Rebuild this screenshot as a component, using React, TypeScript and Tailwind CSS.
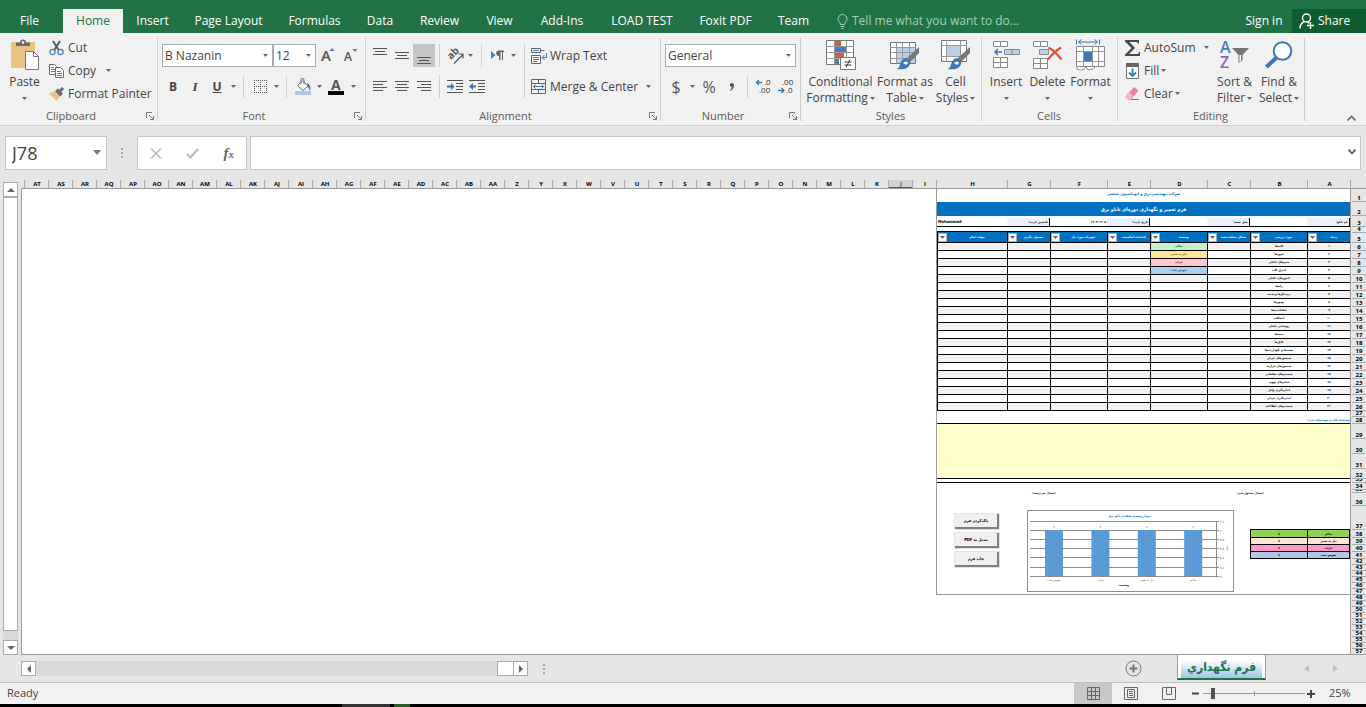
import type { ReactNode } from "react";

/* ---------- data ---------- */

const tabs = [
  { name: "Insert", width: "w-[59px]" },
  { name: "Page Layout", width: "w-[93px]" },
  { name: "Formulas", width: "w-[79px]" },
  { name: "Data", width: "w-[52px]" },
  { name: "Review", width: "w-[67px]" },
  { name: "View", width: "w-[53px]" },
  { name: "Add-Ins", width: "w-[72px]" },
  { name: "LOAD TEST", width: "w-[88px]" },
  { name: "Foxit PDF", width: "w-[79px]" },
  { name: "Team", width: "w-[57px]" },
];

const emptyColumns =
  "AT AS AR AQ AP AO AN AM AL AK AJ AI AH AG AF AE AD AC AB AA Z Y X W V U T S R Q P O N M L K J I".split(
    " "
  );

const formColumns = [
  { name: "H", width: "w-[71px]", title: "مهلت انجام" },
  { name: "G", width: "w-[43px]", title: "مسئول پیگیری" },
  { name: "F", width: "w-[57px]", title: "تجهیزات مورد نیاز" },
  { name: "E", width: "w-[43px]", title: "اقدامات انجام‌شده" },
  { name: "D", width: "w-[57px]", title: "وضعیت" },
  { name: "C", width: "w-[43px]", title: "مشکل مشاهده‌شده" },
  { name: "B", width: "w-[57px]", title: "مورد بررسی" },
  { name: "A", width: "w-[43px]", title: "ردیف" },
];

// height of every sheet row at 25% zoom
const rowHeights = [
  13, 14, 11, 6, 10,
  8, 8, 8, 8, 8, 8, 8, 8, 8, 8, 8, 8, 8, 8, 8, 8, 8, 8, 8, 8, 8,
  6, 7, 15, 15, 15, 10, 4, 7, 3, 13, 24, 8, 7, 7, 7,
  6, 6, 6, 6, 6, 6, 6, 6, 6, 6, 6, 6, 6, 6, 6, 6,
];

const items = [
  ["۱", "کلیدها"],
  ["۲", "فیوزها"],
  ["۳", "سیم‌های داخلی"],
  ["۴", "کنترل کلید"],
  ["۵", "کنتورهای داخلی"],
  ["۶", "رله‌ها"],
  ["۷", "ترمینال‌ها و شینه"],
  ["۸", "موتورها"],
  ["۹", "خنک‌کننده‌ها"],
  ["۱۰", "اتصالات"],
  ["۱۱", "روشنایی داخلی"],
  ["۱۲", "پمپ‌ها"],
  ["۱۳", "کابل‌ها"],
  ["۱۴", "بست‌ها و نگهدارنده‌ها"],
  ["۱۵", "سنسورهای جریان"],
  ["۱۶", "سنسورهای حرارت"],
  ["۱۷", "سیستم‌های حفاظتی"],
  ["۱۸", "فیلترهای تهویه"],
  ["۱۹", "اندازه‌گیری ولتاژ"],
  ["۲۰", "اندازه‌گیری جریان"],
  ["۲۱", "سیستم‌های اطلاعات"],
];

const statuses = [
  { text: "سالم", cell: "bg-[#c6efce] text-[#006100]" },
  { text: "نیاز به تعمیر", cell: "bg-[#ffe699] text-[#7f6000]" },
  { text: "خراب", cell: "bg-[#ffc7ce] text-[#9c0006]" },
  { text: "تعویض شده", cell: "bg-[#a9d0ee] text-[#1f4e78]" },
];

const summary = [
  { text: "سالم", row: "h-2 bg-[#92d050]" },
  { text: "نیاز به تعمیر", row: "h-[7px] bg-[#fce4d6]" },
  { text: "خراب", row: "h-[7px] bg-[#ff99cc]" },
  { text: "تعویض شده", row: "h-[7px] bg-[#b4c6e7]" },
];

/* ---------- small pieces ---------- */

const Caret = ({ className = "" }: { className?: string }) => (
  <svg width="5" height="3" viewBox="0 0 5 3" className={`shrink-0 ${className}`}>
    <path d="M0 0h5L2.5 3z" fill="#666" />
  </svg>
);

const Sep = ({ className = "h-6" }: { className?: string }) => (
  <div className={`w-px shrink-0 bg-[#d0d0d0] ${className}`} />
);

const IconButton = ({
  label,
  width = "w-[22px]",
  children,
  className = "",
}: {
  label: string;
  width?: string;
  children: ReactNode;
  className?: string;
}) => (
  <button
    aria-label={label}
    className={`flex h-[23px] shrink-0 items-center justify-center ${width} ${className}`}
  >
    {children}
  </button>
);

const Group = ({
  title,
  width,
  launcher = false,
  children,
}: {
  title: string;
  width: string;
  launcher?: boolean;
  children: ReactNode;
}) => (
  <section className={`relative flex shrink-0 flex-col ${width}`}>
    <div className="flex h-[75px] pt-[3px]">{children}</div>
    <div className="flex h-[18px] items-center text-[#5c5c5c]">
      <span className={`flex-1 text-center text-[11px] ${launcher ? "pr-1" : "pr-[2px]"}`}>{title}</span>
      {launcher && (
        <button aria-label={`${title} settings`} className="mr-1 w-2">
          <svg width="8" height="8" viewBox="0 0 8 8" fill="none" stroke="#777">
            <path d="M.5 6V.5H6M3 3l4 4M7.500 4v3.500H4" />
          </svg>
        </button>
      )}
    </div>
    <div className="absolute right-0 top-[5px] h-[83px] w-px bg-[#d0d0d0]" />
  </section>
);

const BigButton = ({
  icon,
  lines,
  width,
}: {
  icon: ReactNode;
  lines: string[];
  width: string;
}) => (
  <button className={`flex shrink-0 flex-col items-center whitespace-nowrap ${width}`}>
    <span className="flex h-[38px] items-center justify-center">{icon}</span>
    <span className="h-4 leading-4">{lines[0]}</span>
    <span className="flex h-4 items-center leading-4">
      {lines[1]}
      <Caret className={lines[1] ? "ml-[2px]" : ""} />
    </span>
  </button>
);

const RowButton = ({
  icon,
  text,
  caret = "",
}: {
  icon: ReactNode;
  text: string;
  caret?: string;
}) => (
  <button className="flex h-[23px] items-center whitespace-nowrap">
    <span className="flex w-[19px] shrink-0">{icon}</span>
    {text}
    {caret && <Caret className={caret} />}
  </button>
);

const Combo = ({ label, value, width }: { label: string; value: string; width: string }) => (
  <div className={`relative h-[23px] shrink-0 ${width}`}>
    <select
      aria-label={label}
      className="h-full w-full appearance-none border border-[#ababab] bg-white pl-[2px] text-[12px] text-[#444]"
    >
      <option>{value}</option>
    </select>
    <Caret className="absolute right-[5px] top-[10px]" />
  </div>
);

const Lines = ({ rows }: { rows: [number, number, number][] }) => (
  <svg width="14" height="18" viewBox="0 0 14 18" stroke="#555">
    {rows.map(([x1, x2, y]) => (
      <path key={y} d={`M${x1} ${y + 0.5}H${x2}`} />
    ))}
  </svg>
);

/* ---------- icons ---------- */

const PasteIcon = () => (
  <svg width="30" height="32" viewBox="0 0 30 32">
    <rect x="1" y="3" width="24" height="26" fill="#eac282" />
    <path d="M6 7V3.500h4a3 3 0 0 1 6 0h4V7z" fill="#6b6b6b" />
    <circle cx="13" cy="3.500" r="1.200" fill="#fff" />
    <path d="M15.500 12.500h8l5 5v13h-13z" fill="#fff" stroke="#777" />
    <path d="M23.500 12.500v5h5" fill="none" stroke="#777" />
  </svg>
);

const CutIcon = () => (
  <svg width="15" height="16" viewBox="0 0 15 16" fill="none">
    <path d="M4 1l6 9.500M11 1L5 10.500" stroke="#5a5a5a" strokeWidth="2" />
    <circle cx="3.500" cy="12" r="2.600" stroke="#4a7ebb" strokeWidth="1.300" />
    <circle cx="11.500" cy="12" r="2.600" stroke="#4a7ebb" strokeWidth="1.300" />
  </svg>
);

const CopyIcon = () => (
  <svg width="15" height="14" viewBox="0 0 15 14" fill="#fff" stroke="#5d6f80">
    <path d="M.5.5h5l2 2v8h-7z" />
    <path d="M2 3.500h3M2 5.500h4M2 7.500h4" stroke="#4a7ebb" />
    <path d="M6.500 3.500h5l3 3v7h-8z" />
    <path d="M8 7.500h4M8 9.500h5M8 11.500h5" stroke="#4a7ebb" />
  </svg>
);

const PainterIcon = () => (
  <svg width="16" height="14" viewBox="0 0 16 14">
    <path d="M0 6.500L6 4l5 5.500L7.500 14z" fill="#eac282" />
    <path d="M6 4l3-2.500 5 5L11 9.500z" fill="#6b6b6b" />
    <path d="M10.500 4.500L14 1" stroke="#6b6b6b" strokeWidth="3" />
  </svg>
);

const BorderIcon = () => (
  <svg width="13" height="13" viewBox="0 0 13 13" fill="none" stroke="#555">
    <path d="M0 .5h13M0 6.500h13M0 12.500h13M.5 0v13M6.500 0v13M12.500 0v13" strokeDasharray="1 1" />
  </svg>
);

const BucketIcon = () => (
  <svg width="17" height="17" viewBox="0 0 17 17">
    <path d="M2.500 7.500l5-4.500 5.500 5-5 4.500z" fill="#fff" stroke="#666" />
    <path d="M6 6V2a1.500 1.500 0 0 1 3 0v4" fill="none" stroke="#666" />
    <path d="M12 5c3 1 4 4 3 8l-2-4z" fill="#4a7ebb" />
    <rect y="13" width="16" height="4" fill="#b4c6e7" />
  </svg>
);

const OrientationIcon = () => (
  <svg width="17" height="16" viewBox="0 0 17 16" className="overflow-visible">
    <text x="4" y="12" transform="rotate(-45 4 12)" fontSize="10" fontWeight="700" fill="#555">
      ab
    </text>
    <path d="M7 15.500l9-9M16 10.500V6h-4.500" fill="none" stroke="#555" strokeWidth="1.200" />
  </svg>
);

const ParagraphIcon = () => (
  <svg width="13" height="11" viewBox="0 0 13 11">
    <path d="M0 1l4.500 4L0 9z" fill="#4a7ebb" />
    <path d="M8 6a2.500 2.500 0 0 1 0-5.500h5V2h-1v8h-1V2H9.500v8H8z" fill="#666" />
  </svg>
);

const IndentIcon = ({ left = false }: { left?: boolean }) => (
  <svg width="16" height="14" viewBox="0 0 16 14">
    <path d="M0 .5h16M9 3.500h7M9 6.500h7M9 9.500h7M0 12.500h16" stroke="#555" />
    {left ? (
      <path d="M0 6.500L4 3v2.500h3v2H4V10z" fill="#3a78b5" />
    ) : (
      <path d="M7.500 6.500L4 3v2.500H0v2h4V10z" fill="#3a78b5" />
    )}
  </svg>
);

const WrapIcon = () => (
  <svg width="16" height="16" viewBox="0 0 16 16" fill="none" stroke="#666">
    <path d="M.5.5h9v4h-9zM9.500 2.500h4" />
    <path d="M2 2.500h6" stroke="#4a7ebb" />
    <path d="M.5 7.500h9v8h-9z" fill="#fff" />
    <path
      d="M2 9.500h6M2 11.500h6M2 13.500h4M15.500 5v4.500h-4M13.500 7l-2.500 2.500 2.500 2.500"
      stroke="#3a78b5"
    />
  </svg>
);

const MergeIcon = () => (
  <svg width="15" height="15" viewBox="0 0 15 15" fill="none" stroke="#666">
    <path d="M.5.5h14v14H.5zM.5 4.500h14M.5 10.500h14M7.500.5v4M7.500 10.500v4" />
    <path d="M2.500 7.500h10M4.500 5.500l-2 2 2 2M10.500 5.500l2 2-2 2" stroke="#3a78b5" />
  </svg>
);

const DecimalIcon = ({ increase = false }: { increase?: boolean }) => (
  <svg width="15" height="15" viewBox="0 0 15 15" className="overflow-visible">
    <text x={increase ? 8 : 4} y="6" fontSize="8" fill="#333">
      {increase ? ".0" : ".00"}
    </text>
    <text x={increase ? 3 : 8} y="14" fontSize="8" fill="#333">
      {increase ? ".00" : ".0"}
    </text>
    {increase ? (
      <path d="M6 3.500H.5M3 1L.5 3.500 3 6" stroke="#3a78b5" strokeWidth="1.300" fill="none" />
    ) : (
      <path d="M0 11.500h6M3.500 9L6 11.500 3.500 14" stroke="#3a78b5" strokeWidth="1.300" fill="none" />
    )}
  </svg>
);

const ConditionalIcon = () => (
  <svg width="30" height="31" viewBox="0 0 30 31">
    <path d="M.5.500h27v24H.5z" fill="#fff" stroke="#777" />
    <path d="M.5 6.500h27M.5 12.500h27M.5 18.500h27M8.500.5v24M20.500.5v24" stroke="#999" fill="none" />
    <path d="M9 1h6v5H9zM9 13h9v5H9z" fill="#cf5f42" />
    <path d="M9 7h11v5H9zM9 19h4v5H9z" fill="#4a7ebb" />
    <path d="M14.500 17.500h15v12h-15z" fill="#fff" stroke="#777" />
    <path d="M18.500 22h7M18.500 25h7M24 19.500l-4 8" stroke="#333" fill="none" />
  </svg>
);

const Brush = () => (
  <>
    <path d="M29 7v6l-9 9-3-4z" fill="#777" />
    <path d="M17 18l3.500 4c-1 7-7 8-14 7 3-1 3-3 4-6s3-5 6.500-5z" fill="#3f77b5" />
    <path d="M13 23c2-2 4-2 5 0l-2 2c-1-1-2-1-3-2z" fill="#fff" />
  </>
);

const TableStyleIcon = () => (
  <svg width="30" height="30" viewBox="0 0 30 30">
    <path d="M.5 2.500h25v21H.5z" fill="#fff" stroke="#777" />
    <path d="M7 8h18v15H7z" fill="#bcd0e8" />
    <path
      d="M.5 7.500h25M.5 12.500h25M.5 18.500h25M6.500 2.500v21M12.500 2.500v21M19.500 2.500v21"
      stroke="#999"
    />
    <Brush />
  </svg>
);

const CellStyleIcon = () => (
  <svg width="30" height="30" viewBox="0 0 30 30">
    <path d="M.5.500h25v21H.5z" fill="#fff" stroke="#777" />
    <path d="M.5 5.500h25M.5 16.500h25M5.500.5v21M19.500.5v21" stroke="#999" />
    <path d="M6 6h13v10H6z" fill="#bcd0e8" />
    <Brush />
  </svg>
);

const InsertIcon = () => (
  <svg width="27" height="28" viewBox="0 0 27 28" fill="#fff" stroke="#888">
    <path d="M.5.500h14v5H.5zM7.500.5v5M.5 16.500h14v10H.5zM7.500 16.500v10M.5 21.500h14" />
    <path d="M11.500 8.500h15v5h-15zM19 8.500v5" fill="#bcd0e8" />
    <path d="M9 11H2M5 8l-3 3 3 3" stroke="#3a78b5" strokeWidth="1.500" fill="none" />
  </svg>
);

const DeleteIcon = () => (
  <svg width="30" height="28" viewBox="0 0 30 28" fill="#fff" stroke="#888">
    <path d="M.5.500h14v5H.5zM7.500.5v5M.5 17.500h14v10H.5zM7.500 17.500v10M.5 22.500h14" />
    <path d="M6.500 8.500h9v5h-9z" fill="#bcd0e8" />
    <path
      d="M15.500 6.500C20 9 25 14 28.500 18.500M28 6.500c-5 3-9 7-13 12"
      stroke="#d9543a"
      strokeWidth="2.200"
      fill="none"
    />
  </svg>
);

const FormatIcon = () => (
  <svg width="29" height="32" viewBox="0 0 29 32" fill="none" stroke="#999">
    <path d="M.5.5v5M23.500.5v5M2.500 3h19M5.500.5l-3 2.500 3 2.500M18.500.5l3 2.500-3 2.500" stroke="#3a78b5" />
    <path d="M.5 7.500h28v20H.5z" fill="#fff" stroke="#888" />
    <path d="M7.500 7.500v20M16.500 7.500v20M22.500 7.500v20M.5 12.500h28M.5 22.500h28" />
    <path d="M8 13h8v9H8z" fill="#3f77b5" stroke="none" />
    <path d="M1 28v2c3 2 7 1 9-2 0 3 6 4 9 0" fill="#fff" stroke="#888" />
  </svg>
);

const SumIcon = () => (
  <svg width="16" height="16" viewBox="0 0 16 16">
    <path d="M0 0h14v3.500h-1L12 2H4.500L10 8l-6 6h9l1-2h1v4H0v-1.500L6.500 8 0 1.500z" fill="#4a4a4a" />
  </svg>
);

const FillIcon = () => (
  <svg width="15" height="16" viewBox="0 0 15 16">
    <path d="M1.500.5h12v15h-12z" fill="#fff" stroke="#777" />
    <path d="M1 0h13v4H1z" fill="#666" />
    <path d="M7.500 5.500v7M4 9.500l3.500 3.500L11 9.500" stroke="#3a78b5" strokeWidth="1.800" fill="none" />
  </svg>
);

const EraserIcon = () => (
  <svg width="15" height="13" viewBox="0 0 15 13">
    <path d="M4 5.500L9 0l4.500 3.500-5 6z" fill="#ee8299" />
    <path d="M3.500 6L8 10l-2 2.500H3.500L.5 10z" fill="#f5b8c4" stroke="#e8899c" strokeWidth=".6" />
    <path d="M6 12.500h8" stroke="#777" />
  </svg>
);

const SortIcon = () => (
  <svg width="29" height="30" viewBox="0 0 29 30" className="overflow-visible">
    <text x="0" y="13" fontSize="16" fontWeight="600" fill="#4a7ebb">
      A
    </text>
    <text x="0" y="28" fontSize="16" fontWeight="600" fill="#9160b8">
      Z
    </text>
    <path d="M12 8h17l-6.500 7v5.500L18.500 23v-8z" fill="#777" />
    <path d="M19.500 15h1.500v6l-1.500 1z" fill="#fff" />
  </svg>
);

const FindIcon = () => (
  <svg width="28" height="28" viewBox="0 0 28 28" fill="none">
    <path d="M11 17L1.500 26" stroke="#3f77b5" strokeWidth="4" />
    <circle cx="17.500" cy="10" r="8.800" fill="#fff" stroke="#3f77b5" strokeWidth="2" />
  </svg>
);

/* ---------- page parts ---------- */

const TitleTabs = () => (
  <header className="flex h-[33px] shrink-0 items-end bg-[#217346] text-white">
    <button className="h-6 w-[63px] pr-1">File</button>
    <button className="h-6 w-[60px] bg-[#f1f1f1] text-[#217346]">Home</button>
    {tabs.map((tab) => (
      <button key={tab.name} className={`h-6 shrink-0 whitespace-nowrap ${tab.width}`}>
        {tab.name}
      </button>
    ))}
    <label className="flex h-6 flex-1 items-center gap-1 pl-[15px]">
      <svg width="11" height="15" viewBox="0 0 11 15" fill="none" stroke="#a5d0b5">
        <path d="M3.500 10.500C3.500 8 1 7.500 1 5a4.500 4.500 0 0 1 9 0c0 2.500-2.500 3-2.500 5.500zM3.500 12.500h4M4.500 14.500h2" />
      </svg>
      <input
        aria-label="Tell me what you want to do"
        placeholder="Tell me what you want to do..."
        className="min-w-0 flex-1 bg-transparent placeholder:text-[#a5d0b5]"
      />
    </label>
    <button className="h-6 w-[56px]">Sign in</button>
    <button className="flex h-6 w-[74px] items-center gap-[3px] bg-[#0e5c2f] pl-[7px]">
      <svg width="16" height="16" viewBox="0 0 16 16" fill="none" stroke="#fff" strokeWidth="1.400">
        <circle cx="7.500" cy="5" r="4" />
        <path d="M1 15.500c0-4 2-6 4.500-7M8.500 9l2 1.500M8 12.500h7M11.500 9v7" />
      </svg>
      Share
    </button>
  </header>
);

const Ribbon = () => (
  <div className="flex h-[93px] shrink-0 border-b border-[#d2d2d2] bg-[#f1f1f1]">
    <Group title="Clipboard" width="w-[158px]" launcher>
      <BigButton icon={<PasteIcon />} lines={["Paste", ""]} width="w-[49px]" />
      <div className="flex flex-col">
        <RowButton icon={<CutIcon />} text="Cut" />
        <RowButton icon={<CopyIcon />} text="Copy" caret="ml-[10px]" />
        <RowButton icon={<PainterIcon />} text="Format Painter" />
      </div>
    </Group>

    <Group title="Font" width="w-[208px]" launcher>
      <div className="flex flex-col gap-2 pl-1 pt-2">
        <div className="flex">
          <Combo label="Font" value="B Nazanin" width="w-[111px]" />
          <Combo label="Font size" value="12" width="w-[43px]" />
          <IconButton label="Increase font size" width="w-6">
            <svg width="14" height="17" viewBox="0 0 14 17" className="overflow-visible">
              <text x="0" y="14" fontSize="15" fontWeight="600" fill="#555">
                A
              </text>
              <path d="M8.500 4h5L11 1z" fill="#4a7ebb" />
            </svg>
          </IconButton>
          <IconButton label="Decrease font size">
            <svg width="14" height="17" viewBox="0 0 14 17" className="overflow-visible">
              <text x="0" y="14" fontSize="12" fontWeight="600" fill="#555">
                A
              </text>
              <path d="M8.500 2h5L11 5z" fill="#4a7ebb" />
            </svg>
          </IconButton>
        </div>
        <div className="flex items-center text-[#444]">
          <IconButton label="Bold">
            <b>B</b>
          </IconButton>
          <IconButton label="Italic">
            <i className="font-['Liberation_Serif',serif] text-[13px] font-bold">I</i>
          </IconButton>
          <IconButton label="Underline">
            <b className="underline">U</b>
          </IconButton>
          <IconButton label="Underline style" width="w-[10px]">
            <Caret />
          </IconButton>
          <Sep className="mx-[5px] h-[22px]" />
          <IconButton label="Borders">
            <BorderIcon />
          </IconButton>
          <IconButton label="Border style" width="w-[10px]">
            <Caret />
          </IconButton>
          <Sep className="mx-[5px] h-[22px]" />
          <IconButton label="Fill colour">
            <BucketIcon />
          </IconButton>
          <IconButton label="Fill colours" width="w-[10px]">
            <Caret />
          </IconButton>
          <IconButton label="Font colour" width="w-6">
            <svg width="16" height="16" viewBox="0 0 16 16" className="overflow-visible">
              <text x="3" y="11" fontSize="14" fontWeight="700" fill="#555">
                A
              </text>
              <rect y="12" width="16" height="4" />
            </svg>
          </IconButton>
          <IconButton label="Font colours" width="w-[10px]">
            <Caret />
          </IconButton>
        </div>
      </div>
    </Group>

    <Group title="Alignment" width="w-[295px]" launcher>
      <div className="flex flex-col gap-2 pl-[3px] pt-2">
        <div className="flex items-center">
          <IconButton label="Top align">
            <Lines rows={[[0, 14, 1], [2, 12, 4], [0, 14, 7]]} />
          </IconButton>
          <IconButton label="Middle align">
            <Lines rows={[[0, 14, 5], [2, 12, 8], [0, 14, 11]]} />
          </IconButton>
          <IconButton label="Bottom align" className="bg-[#c5c5c5]">
            <Lines rows={[[0, 14, 10], [2, 12, 13], [0, 14, 16]]} />
          </IconButton>
          <Sep className="mx-1 h-[23px]" />
          <IconButton label="Orientation">
            <OrientationIcon />
          </IconButton>
          <IconButton label="Orientations" width="w-2">
            <Caret />
          </IconButton>
          <Sep className="ml-[7px] mr-1 h-[23px]" />
          <IconButton label="Text direction">
            <ParagraphIcon />
          </IconButton>
          <IconButton label="Text directions" width="w-[10px]">
            <Caret />
          </IconButton>
        </div>
        <div className="flex items-center">
          <IconButton label="Align left">
            <Lines rows={[[0, 14, 3], [0, 10, 6], [0, 14, 9], [0, 10, 12]]} />
          </IconButton>
          <IconButton label="Center">
            <Lines rows={[[0, 14, 3], [2, 12, 6], [0, 14, 9], [2, 12, 12]]} />
          </IconButton>
          <IconButton label="Align right">
            <Lines rows={[[0, 14, 3], [4, 14, 6], [0, 14, 9], [4, 14, 12]]} />
          </IconButton>
          <Sep className="mx-1 h-[23px]" />
          <IconButton label="Increase indent">
            <IndentIcon />
          </IconButton>
          <IconButton label="Decrease indent">
            <IndentIcon left />
          </IconButton>
        </div>
      </div>
      <Sep className="mx-[6px] mt-2 h-[54px]" />
      <div className="flex flex-col gap-2 pt-2">
        <RowButton icon={<WrapIcon />} text="Wrap Text" />
        <RowButton icon={<MergeIcon />} text="Merge & Center" caret="ml-2" />
      </div>
    </Group>

    <Group title="Number" width="w-[140px]" launcher>
      <div className="flex flex-col gap-2 pl-1 pt-2">
        <Combo label="Number format" value="General" width="w-[131px]" />
        <div className="flex items-center text-[16px] text-[#555]">
          <IconButton label="Currency">$</IconButton>
          <IconButton label="Currencies" width="w-[10px]">
            <Caret />
          </IconButton>
          <IconButton label="Percent" width="w-6">
            %
          </IconButton>
          <IconButton label="Comma style">
            <svg width="6" height="8" viewBox="0 0 6 8">
              <path
                d="M3 0a2 2 0 0 1 2 2c0 3-1.500 5-4 6V7c1-.5 1.700-1.500 1.800-3A2 2 0 0 1 3 0z"
                fill="#555"
              />
            </svg>
          </IconButton>
          <Sep className="mx-1 h-[22px]" />
          <IconButton label="Increase decimal">
            <DecimalIcon increase />
          </IconButton>
          <IconButton label="Decrease decimal">
            <DecimalIcon />
          </IconButton>
        </div>
      </div>
    </Group>

    <Group title="Styles" width="w-[181px]">
      <div className="flex pl-[3px]">
        <BigButton icon={<ConditionalIcon />} lines={["Conditional", "Formatting"]} width="w-[73px]" />
        <BigButton icon={<TableStyleIcon />} lines={["Format as", "Table"]} width="w-14" />
        <BigButton icon={<CellStyleIcon />} lines={["Cell", "Styles"]} width="w-[45px]" />
      </div>
    </Group>

    <Group title="Cells" width="w-[136px]">
      <div className="flex pl-1">
        <BigButton icon={<InsertIcon />} lines={["Insert", ""]} width="w-10" />
        <BigButton icon={<DeleteIcon />} lines={["Delete", ""]} width="w-[43px]" />
        <BigButton icon={<FormatIcon />} lines={["Format", ""]} width="w-[43px]" />
      </div>
    </Group>

    <Group title="Editing" width="w-[187px]">
      <div className="flex w-[92px] flex-col pl-[7px]">
        <RowButton icon={<SumIcon />} text="AutoSum" caret="ml-2" />
        <RowButton icon={<FillIcon />} text="Fill" caret="ml-[2px]" />
        <RowButton icon={<EraserIcon />} text="Clear" caret="ml-[2px]" />
      </div>
      <BigButton icon={<SortIcon />} lines={["Sort &", "Filter"]} width="w-[49px]" />
      <BigButton icon={<FindIcon />} lines={["Find &", "Select"]} width="w-[40px]" />
    </Group>

    <div className="flex flex-1 items-end justify-end pb-1 pr-[10px]">
      <button aria-label="Collapse the ribbon">
        <svg width="9" height="6" viewBox="0 0 9 6" fill="none" stroke="#666" strokeWidth="1.600">
          <path d="M.5 5.500l4-4 4 4" />
        </svg>
      </button>
    </div>
  </div>
);

const Dots = ({ className = "" }: { className?: string }) => (
  <div className={`flex flex-col items-center gap-[2px] ${className}`}>
    <i className="size-[2px] bg-[#ababab]" />
    <i className="size-[2px] bg-[#ababab]" />
    <i className="size-[2px] bg-[#ababab]" />
  </div>
);

const FormulaBar = () => (
  <div className="flex h-[54px] shrink-0 items-center px-[5px]">
    <div className="relative h-[34px] w-[102px]">
      <input
        aria-label="Name box"
        defaultValue="J78"
        className="h-full w-full border border-[#c6c6c6] bg-white pl-[6px] text-[18px] text-[#444]"
      />
      <svg width="8" height="5" viewBox="0 0 8 5" className="absolute right-[6px] top-[14px]">
        <path d="M0 0h8L4 5z" fill="#777" />
      </svg>
    </div>
    <Dots className="w-[30px]" />
    <div className="flex h-[34px] w-[110px] items-center justify-around border border-[#c6c6c6] bg-white">
      <button aria-label="Cancel">
        <svg width="12" height="11" viewBox="0 0 12 11" stroke="#bdbdbd" strokeWidth="1.600">
          <path d="M1 .5l10 10M11 .5L1 10.500" />
        </svg>
      </button>
      <button aria-label="Enter">
        <svg width="13" height="11" viewBox="0 0 13 11" fill="none" stroke="#bdbdbd" strokeWidth="2.200">
          <path d="M1 6l3.500 3.500L12 1" />
        </svg>
      </button>
      <button
        aria-label="Insert function"
        className="font-['Liberation_Serif',serif] text-[15px] font-bold italic text-[#666]"
      >
        f<span className="text-[11px]">x</span>
      </button>
    </div>
    <div className="relative ml-[3px] h-[34px] flex-1">
      <input aria-label="Formula" className="h-full w-full border border-[#c6c6c6] bg-white px-2" />
      <svg
        width="8"
        height="6"
        viewBox="0 0 8 6"
        fill="none"
        stroke="#555"
        strokeWidth="1.600"
        className="absolute right-[5px] top-[13px]"
      >
        <path d="M.5.500L4 4.500 7.500.5" />
      </svg>
    </div>
  </div>
);

const ScrollArrow = ({ label, d }: { label: string; d: string }) => (
  <button
    aria-label={label}
    className="flex size-[15px] shrink-0 items-center justify-center border border-[#ababab] bg-white"
  >
    <svg width="8" height="8" viewBox="0 0 8 8">
      <path d={d} fill="#666" />
    </svg>
  </button>
);

const ColumnHeads = () => (
  <div className="flex h-[9px] items-end border-b border-[#9b9b9b] text-[6px] font-bold leading-[8px] text-black">
    <div className="flex min-w-0 flex-1 justify-end overflow-hidden">
      {emptyColumns.map((c) => (
        <span
          key={c}
          className={`w-6 shrink-0 border-l border-[#ababab] pl-px text-center ${
            c === "J" ? "bg-[#d2d2d2] text-[#217346] shadow-[inset_0_-1px_#217346]" : ""
          }`}
        >
          {c}
        </span>
      ))}
    </div>
    {formColumns.map((c) => (
      <span key={c.name} className={`shrink-0 border-l border-[#ababab] pl-px text-center ${c.width}`}>
        {c.name}
      </span>
    ))}
    <span className="h-2 w-4 shrink-0 border-l border-[#ababab]" />
  </div>
);

const RowHeads = () => (
  <div className="flex w-4 shrink-0 flex-col border-l border-[#9b9b9b] bg-[#e6e6e6] pl-px text-[6px] font-bold text-black">
    {rowHeights.map((h, i) => (
      <div
        key={i}
        style={{ height: h }}
        className="flex shrink-0 items-end justify-center overflow-hidden border-b border-[#ababab] leading-[6px]"
      >
        {i + 1}
      </div>
    ))}
  </div>
);

const StatusChart = () => (
  <svg width="207" height="82" viewBox="0 0 207 82" fontWeight="400">
    <rect x=".5" y=".5" width="206" height="81" fill="#fff" stroke="#8c8c8c" />
    <text x="103" y="7" fontSize="3" fontWeight="700" fill="#0070c0" textAnchor="middle">
      نمودار وضعیت قطعات تابلو برق
    </text>
    {["1.2", "1", "0.8", "0.6", "0.4", "0.2", "0"].map((v, i) => (
      <g key={v}>
        <path d={`M3 ${Math.round(11 + i * 9.1) + 0.5}h189`} stroke="#8c8c8c" />
        <text x="193" y={13 + i * 9.1} fontSize="3" fill="#555">
          {v}
        </text>
      </g>
    ))}
    <path d="M189.500 11v56" stroke="#8c8c8c" />
    {["تعویض شده", "خراب", "نیاز به تعمیر", "سالم"].map((name, i) => (
      <g key={name}>
        <rect x={18 + i * 46.4} y="20" width="18" height="46" fill="#5b9bd5" />
        <text x={27 + i * 46.4} y="18" fontSize="3" fill="#555" textAnchor="middle">
          1
        </text>
        <text x={27 + i * 46.4} y="71" fontSize="3" fill="#555" textAnchor="middle">
          {name}
        </text>
      </g>
    ))}
    <text x="97" y="76" fontSize="3" fontWeight="700" textAnchor="middle">
      وضعیت
    </text>
    <text x="201" y="41" fontSize="3" fill="#555" transform="rotate(-90 201 41)">
      تعداد
    </text>
  </svg>
);

const InfoCell = ({ width, text = "", label = false }: { width: string; text?: string; label?: boolean }) => (
  <div
    dir="rtl"
    className={`shrink-0 whitespace-nowrap px-px ${width} ${
      label ? "border-r border-black bg-[#e8f0fc]" : ""
    }`}
  >
    {text}
  </div>
);

const MaintenanceForm = () => (
  <div className="flex w-[414px] shrink-0 flex-col self-start border-b border-l border-[#9b9b9b] bg-white font-['DejaVu_Sans_Condensed','DejaVu_Sans',sans-serif] text-[4px] font-bold text-black">
    <div dir="rtl" className="h-[13px] text-center leading-[10px] text-[#0070c0]">
      شرکت مهندسی برق و اتوماسیون صنعتی
    </div>
    <h1 dir="rtl" className="h-[14px] bg-[#0070c0] text-center text-[5px] leading-[14px] text-white">
      فرم تعمیر و نگهداری دوره‌ای تابلو برق
    </h1>
    <div className="mt-[2px] flex h-[9px] border-b border-black text-[3px] leading-[8px]">
      <div className="w-[70px] shrink-0 pl-px text-[4px]">Mohammad</div>
      <InfoCell width="w-[43px]" label text="تکنسین بازدید:" />
      <InfoCell width="w-[57px]" text="۱۴۰۳/۰۲/۰۵" />
      <InfoCell width="w-[43px]" label text="تاریخ بازدید:" />
      <InfoCell width="w-[57px]" />
      <InfoCell width="w-[43px]" label text="محل نصب:" />
      <InfoCell width="w-[57px]" />
      <InfoCell width="w-[43px]" label text="نام تابلو:" />
    </div>

    <table className="mt-1 w-full table-fixed border-collapse text-[3px]">
      <colgroup>
        <col className="w-[70px]" />
        {formColumns.slice(1).map((c) => (
          <col key={c.name} className={c.width} />
        ))}
      </colgroup>
      <thead>
        <tr className="h-[11px] bg-[#0070c0] text-white">
          {formColumns.map((c) => (
            <th key={c.name} className="border border-black p-0">
              <div className="flex h-[10px] items-center">
                <button
                  aria-label={`Filter ${c.name}`}
                  className="flex size-[9px] shrink-0 items-center justify-center border border-[#ababab] bg-white"
                >
                  <Caret />
                </button>
                <span dir="rtl" className="min-w-0 flex-1 whitespace-nowrap text-center leading-[8px]">
                  {c.title}
                </span>
              </div>
            </th>
          ))}
        </tr>
      </thead>
      <tbody>
        {items.map(([num, name], i) => (
          <tr key={num} className={`h-2 leading-[7px] ${i % 2 ? "bg-white" : "bg-[#f2f2f2]"}`}>
            <td className="border border-black p-0" />
            <td className="border border-black p-0" />
            <td className="border border-black p-0" />
            <td className="border border-black p-0" />
            <td dir="rtl" className={`border border-black p-0 text-center ${statuses[i]?.cell ?? ""}`}>
              {statuses[i]?.text}
            </td>
            <td className="border border-black p-0" />
            <td dir="rtl" className="whitespace-nowrap border border-black p-0 text-center">
              {name}
            </td>
            <td className="border border-black p-0 text-center">{num}</td>
          </tr>
        ))}
      </tbody>
    </table>

    <div dir="rtl" className="h-[13px] border-b border-black pt-[5px] text-[3px] leading-[8px] text-[#0070c0]">
      توضیحات کلی و توصیه‌های فنی:
    </div>
    <div className="h-[55px] border-b border-black bg-[#ffffcc]" />
    <div className="h-1 border-b border-black" />

    <div className="flex h-[27px] pt-[6px] text-[3px] leading-[8px]">
      <div dir="rtl" className="w-[213px] text-center">
        امضای سرپرست:
      </div>
      <div dir="rtl" className="w-[200px] text-center">
        امضای مسئول فنی:
      </div>
    </div>

    <div className="flex h-[84px] items-start">
      <div className="ml-[18px] mt-1 flex w-[44px] flex-col gap-1">
        {["پاک‌کردن فرم", "تبدیل به PDF", "چاپ فرم"].map((text) => (
          <button
            key={text}
            dir="rtl"
            className="h-[15px] border-b-2 border-r-2 border-[#7f7f7f] bg-[#f0f0f0] leading-[12px] shadow-[0_0_0_1px_#e3e3e3]"
          >
            {text}
          </button>
        ))}
      </div>
      <div className="ml-7">
        <StatusChart />
      </div>
      <table className="ml-auto mt-[19px] w-[100px] table-fixed border-collapse text-[3px]">
        <tbody>
          {summary.map((s) => (
            <tr key={s.text} className={`leading-[6px] ${s.row}`}>
              <td className="w-[57px] border border-black p-0 text-center">1</td>
              <td dir="rtl" className="border border-black p-0 text-center">
                {s.text}
              </td>
            </tr>
          ))}
        </tbody>
      </table>
    </div>
  </div>
);

const Sheet = () => (
  <main className="flex min-h-0 flex-1">
    <div className="flex w-[21px] shrink-0 flex-col pl-[3px] pt-[2px]">
      <ScrollArrow label="Scroll up" d="M0 6h8L4 2z" />
      <div className="w-[15px] flex-1 bg-[#dadada] pb-[9px]">
        <div className="h-full border border-[#ababab] bg-white" />
      </div>
      <ScrollArrow label="Scroll down" d="M0 2h8L4 6z" />
    </div>
    <div className="flex min-w-0 flex-1 flex-col">
      <ColumnHeads />
      <div className="flex min-h-0 flex-1 overflow-hidden border-b border-l border-[#9b9b9b] bg-white">
        <div className="flex-1" />
        <MaintenanceForm />
        <RowHeads />
      </div>
    </div>
  </main>
);

const SheetTabs = () => (
  <div className="flex h-[27px] shrink-0 items-center pl-[21px]">
    <ScrollArrow label="Scroll left" d="M6 0v8L2 4z" />
    <div className="flex h-[15px] w-[492px] justify-end bg-[#dadada]">
      <div className="w-4 border border-r-0 border-[#ababab] bg-white" />
      <ScrollArrow label="Scroll right" d="M2 0v8l4-4z" />
    </div>
    <Dots className="ml-[7px] w-[18px]" />
    <div className="flex-1" />
    <button aria-label="New sheet">
      <svg width="17" height="17" viewBox="0 0 17 17" fill="none" stroke="#777">
        <circle cx="8.500" cy="8.500" r="7.500" />
        <path d="M4.500 8.500h8M8.500 4.500v8" strokeWidth="2" />
      </svg>
    </button>
    <button
      dir="rtl"
      className="ml-[35px] h-[25px] w-[89px] self-start whitespace-nowrap border-x border-b-2 border-x-[#9b9b9b] border-b-[#217346] bg-white px-[3px] text-[12px] font-bold leading-[22px] text-[#217346]"
    >
      <span className="block h-[22px] bg-linear-to-b from-white from-20% to-[#9dc3ea] font-['DejaVu_Sans_Condensed','DejaVu_Sans',sans-serif]">
        فرم نگهداري
      </span>
    </button>
    <div className="flex w-[100px] gap-6 pl-[38px]">
      <button aria-label="Previous sheet">
        <svg width="5" height="7" viewBox="0 0 5 7">
          <path d="M5 0v7L0 3.500z" fill="#bdbdbd" />
        </svg>
      </button>
      <button aria-label="Next sheet">
        <svg width="5" height="7" viewBox="0 0 5 7">
          <path d="M0 0v7l5-3.500z" fill="#bdbdbd" />
        </svg>
      </button>
    </div>
  </div>
);

const StatusBar = () => (
  <footer className="flex h-[22px] shrink-0 items-center border-t border-[#c0c0c0] bg-[#f1f1f1] pl-[7px] text-[11px] text-[#444]">
    <span className="flex-1">Ready</span>
    <button aria-label="Normal view" className="flex h-full w-[38px] items-center justify-center bg-[#c8c8c8]">
      <svg width="13" height="13" viewBox="0 0 13 13" fill="none" stroke="#666">
        <path d="M.5.500h12v12H.5zM4.500.5v12M8.500.5v12M.5 4.500h12M.5 8.500h12" />
      </svg>
    </button>
    <button aria-label="Page layout view" className="flex h-full w-[38px] items-center justify-center">
      <svg width="14" height="13" viewBox="0 0 14 13" fill="none" stroke="#666">
        <path d="M.5.500h13v12H.5zM3.500 2.500h7v8h-7zM5 4.500h4M5 6.500h4M5 8.500h4" />
      </svg>
    </button>
    <button aria-label="Page break view" className="flex h-full w-[38px] items-center justify-center">
      <svg width="14" height="13" viewBox="0 0 14 13" fill="none" stroke="#666">
        <path d="M.5.500h13v12H.5zM4.500.5v7M9.500.5v7M4.500 7.500h5" />
      </svg>
    </button>
    <button aria-label="Zoom out" className="ml-1 w-[11px]">
      <svg width="7" height="7" viewBox="0 0 7 7">
        <path d="M0 3.500h7" stroke="#444" strokeWidth="2" />
      </svg>
    </button>
    <div className="relative flex h-full w-[102px] items-center">
      <input
        type="range"
        aria-label="Zoom"
        min={10}
        max={110}
        defaultValue={18}
        className="h-3 w-full appearance-none bg-[linear-gradient(#999,#999)] bg-[length:100%_1px] bg-center bg-no-repeat [&::-webkit-slider-thumb]:h-[11px] [&::-webkit-slider-thumb]:w-1 [&::-webkit-slider-thumb]:appearance-none [&::-webkit-slider-thumb]:bg-[#555]"
      />
      <i className="absolute left-1/2 h-[5px] w-px bg-[#999]" />
    </div>
    <button aria-label="Zoom in" className="ml-[2px] w-[22px]">
      <svg width="8" height="8" viewBox="0 0 8 8">
        <path d="M0 4h8M4 0v8" stroke="#444" strokeWidth="2" />
      </svg>
    </button>
    <span className="w-[37px]">25%</span>
  </footer>
);

export default function App() {
  return (
    <div className="flex h-screen flex-col overflow-hidden bg-[#e6e6e6] font-['Open_Sans','Noto_Sans',sans-serif] text-[12px] text-[#444]">
      <TitleTabs />
      <Ribbon />
      <FormulaBar />
      <Sheet />
      <SheetTabs />
      <StatusBar />
      <div className="flex h-[3px] shrink-0 bg-black">
        <div className="ml-[342px] w-12 bg-[#333]" />
        <div className="ml-1 w-4 bg-[#2b5a2b]" />
      </div>
    </div>
  );
}
